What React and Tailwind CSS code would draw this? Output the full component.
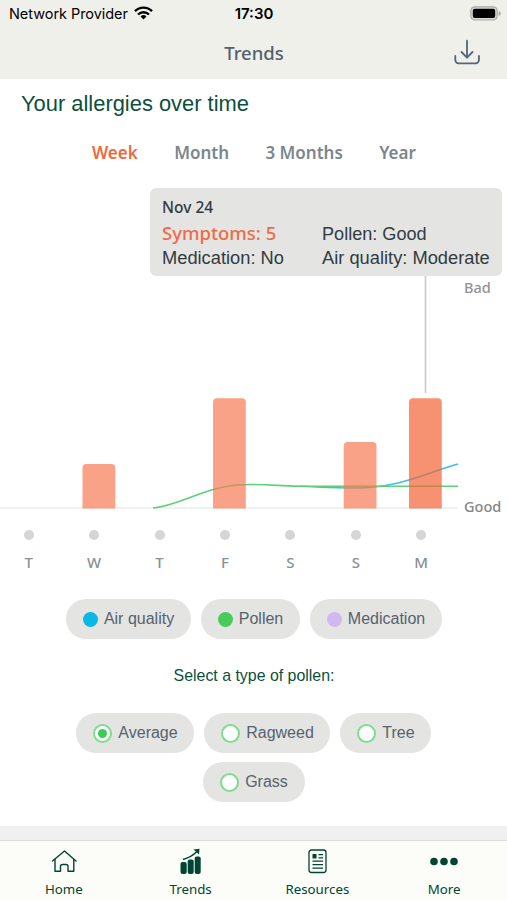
import { useState } from "react";

const periods = ["Week", "Month", "3 Months", "Year"];
const days = ["T", "W", "T", "F", "S", "S", "M"];

const bars = [
  { x: 82.5, y: 464 },
  { x: 213, y: 398.3 },
  { x: 343.7, y: 442 },
  { x: 409, y: 398.3, active: true },
];

const series = [
  { name: "Air quality", width: "w-[125px]", color: "bg-[#09b9e3]" },
  { name: "Pollen", width: "w-[99px]", color: "bg-[#49cb5c]" },
  { name: "Medication", width: "w-[132px]", color: "bg-[#d0b9f1]" },
];

const pollenTypes = [
  { name: "Average", width: "w-[118px]" },
  { name: "Ragweed", width: "w-[126px]" },
  { name: "Tree", width: "w-[91px]" },
  { name: "Grass", width: "w-[102px]" },
];

const StatusBar = () => (
  <div className="flex h-[27px] items-center justify-between pl-[9px] pr-[6px] text-black">
    <div className="flex w-[200px] items-center gap-[6px]">
      <span className="font-['Inter'] text-[14.5px] tracking-[-0.05px] whitespace-nowrap">Network Provider</span>
      <svg className="-mt-px" width="19" height="14" viewBox="0 0 19 14" fill="none" stroke="currentColor" strokeWidth="2.4">
        <path d="M1 5.2a12 12 0 0 1 17 0" />
        <path d="M4 8.5a7.8 7.8 0 0 1 11 0" />
        <path d="M9.5 13.6 6.5 10.5a4.3 4.3 0 0 1 6 0z" fill="currentColor" stroke="none" />
      </svg>
    </div>
    <span className="mr-[2px] pt-[2px] font-['Inter'] text-[15px] font-semibold">17:30</span>
    <div className="flex w-[200px] justify-end">
      <svg width="31" height="15" viewBox="0 0 31 15">
        <rect x="0.8" y="0.8" width="26.4" height="13.2" rx="4" fill="#d9d9d4" stroke="#aaaaa6" strokeWidth="1.2" />
        <rect x="2.8" y="2.8" width="22.4" height="9.2" rx="2" fill="#000" />
        <path d="M28.7 5v5c1.4-.4 2-1.4 2-2.5s-.6-2.1-2-2.5z" fill="#aaaaa6" />
      </svg>
    </div>
  </div>
);

const Header = () => (
  <div className="flex h-[52px] items-center justify-between px-[26px] text-[#53616c]">
    <div className="w-[28px]" />
    <h1 className="pl-px font-['Noto_Sans'] text-[18.5px] font-[550]">Trends</h1>
    <svg width="28" height="28" viewBox="0 0 28 28" fill="none" stroke="#526779" strokeWidth="1.8" strokeLinecap="round" strokeLinejoin="round">
      <path d="M14 1.7v17M8.5 13l5.5 5.6 5.5-5.6" />
      <path d="M2.3 17v4a3.3 3.3 0 0 0 3.3 3.3h17a3.3 3.3 0 0 0 3.3-3.3v-4" />
    </svg>
  </div>
);

const Tooltip = () => (
  <div className="absolute top-[8px] left-[150px] h-[88px] w-[352px] rounded-[6px] bg-[#e4e5e3] pt-[8px] pl-[12px] text-[#323a42]">
    <p className="font-['Noto_Sans'] text-[15.5px] leading-[22px] font-[550]">Nov 24</p>
    <div className="mt-[3px] grid grid-cols-[160px_1fr] font-['Liberation_Sans'] text-[18.1px] leading-[24px] whitespace-nowrap">
      <span className="font-['Noto_Sans'] text-[18.5px] font-[550] text-[#f26a43]">Symptoms: 5</span>
      <span className="pt-px">Pollen: Good</span>
      <span className="text-[18.3px]">Medication: No</span>
      <span className="text-[18.3px]">Air quality: Moderate</span>
    </div>
  </div>
);

const Chart = () => (
  <div className="relative h-[340px]">
    {/* plot uses screen coordinates, 180 is the top of the chart */}
    <svg className="block" width="507" height="340" viewBox="0 180 507 340" fill="none">
      <path d="M0 508H458" stroke="#e3e3e3" strokeWidth="1.2" />
      <path d="M425.5 276V393" stroke="#c9c9c9" strokeWidth="1.6" />
      <path d="M300 486.3C320 487 335 488 355 488C400 488 425 473 458 464" stroke="#3cbfe3" strokeWidth="1.6" />
      <path d="M153 508C185 504.5 205 484.5 250 484.5C275 484.5 280 486.3 310 486.3H458" stroke="#5fd077" strokeWidth="1.6" />
      {bars.map(({ x, y, active }) => (
        <path
          key={x}
          d={`M${x} 508.5V${y + 4}q0-4 4-4h24.8q4 0 4 4V508.5z`}
          fill={active ? "#f26435" : "#f87650"}
          fillOpacity={active ? 0.7 : 0.68}
        />
      ))}
    </svg>
    <Tooltip />
    <span className="absolute top-[98px] left-[464px] font-['Noto_Sans'] text-[14.5px] leading-[19px] font-[550] text-[#929292]">Bad</span>
    <span className="absolute top-[317px] left-[464px] font-['Noto_Sans'] text-[14.5px] leading-[19px] font-[550] text-[#858585]">Good</span>
  </div>
);

const navItems = [
  {
    name: "Home",
    icon: (
      <g fill="none" stroke="currentColor" strokeWidth="1.4" strokeLinejoin="round" strokeLinecap="round">
        <path d="M3.5 13 15.5 3l11.5 10" />
        <path d="M6 11.5V23.3H11.5V18.5q0-2 2-2h3.5q2 0 2 2v4.8h5.8V11.5" />
      </g>
    ),
  },
  {
    name: "Trends",
    icon: (
      <g fill="currentColor">
        <rect x="4.5" y="14" width="6.2" height="12" rx="2" />
        <rect x="11.7" y="11.5" width="6" height="14.5" rx="2" />
        <rect x="18.7" y="8.5" width="6" height="17.5" rx="2" />
        <path d="M7 11.5C13 10 17 7.5 21.5 3" fill="none" stroke="currentColor" strokeWidth="1.4" />
        <path d="M17.5 1.5 23.5.8 23 6.5z" />
      </g>
    ),
  },
  {
    name: "Resources",
    icon: (
      <g fill="none" stroke="currentColor" strokeWidth="1.3">
        <rect x="6" y="2" width="17" height="22.5" rx="2.5" />
        <rect x="9.5" y="6" width="4" height="4.5" fill="currentColor" stroke="none" />
        <path d="M15.5 6.7H20M15.5 9.8H20M9.5 13.2H20M9.5 16.7H20M9.5 20.2H20" />
      </g>
    ),
  },
  {
    name: "More",
    icon: (
      <g fill="currentColor">
        <circle cx="4" cy="13.5" r="3.8" />
        <circle cx="14" cy="13.5" r="3.8" />
        <circle cx="24" cy="13.5" r="3.8" />
      </g>
    ),
  },
];

const BottomNav = () => (
  <nav className="flex h-[60px] border-t border-[#dededc] bg-[#fcfcf9] text-[#004532]">
    {navItems.map((item) => (
      <button key={item.name} className="flex flex-1 flex-col items-center pt-[7px]">
        <svg width="28" height="28" viewBox="0 0 28 28">{item.icon}</svg>
        <span className="mt-[4px] pl-px font-['Noto_Sans'] text-[13.3px] leading-[18px]">{item.name}</span>
      </button>
    ))}
  </nav>
);

const App = () => {
  const [period, setPeriod] = useState("Week");
  const [pollen, setPollen] = useState("Average");

  return (
    <div className="flex h-[900px] w-[507px] flex-col overflow-hidden bg-white">
      <header className="h-[79px] bg-[#f0f0eb]">
        <StatusBar />
        <Header />
      </header>

      <main className="h-[747px]">
        <h2 className="pt-[11px] pl-[21px] font-['Liberation_Sans'] text-[21.9px] leading-[28px] text-[#0b4f3c]">
          Your allergies over time
        </h2>
        <div className="flex h-[62px] items-center gap-[36.4px] pt-[7px] pl-[92px] font-['Noto_Sans'] text-[17px] font-semibold">
          {periods.map((name) => (
            <button
              key={name}
              onClick={() => setPeriod(name)}
              className={period === name ? "text-[#f0683c]" : "text-[#7c868d]"}
            >
              {name}
            </button>
          ))}
        </div>

        <Chart />

        <div className="-ml-[4px] flex w-[458px] pt-[10px]">
          {days.map((day, i) => (
            <div key={i} className="flex flex-1 flex-col items-center">
              <span className="size-[10px] rounded-full bg-[#d5d5d5]" />
              <span className="mt-[12px] font-['Noto_Sans'] text-[15px] leading-[20px] font-medium text-[#8a9094]">{day}</span>
            </div>
          ))}
        </div>

        <div className="mt-[27px] flex justify-center gap-[10px]">
          {series.map((item) => (
            <button key={item.name} className={`flex h-[40px] items-center justify-center gap-[6px] rounded-full bg-[#e4e5e3] pl-px ${item.width}`}>
              <span className={`size-[15px] rounded-full ${item.color}`} />
              <span className="font-['Liberation_Sans'] text-[16px] text-[#56626d]">{item.name}</span>
            </button>
          ))}
        </div>

        <p className="mt-[27px] pl-px text-center font-['Liberation_Sans'] text-[15.9px] leading-[20px] text-[#0b4f3c]">
          Select a type of pollen:
        </p>

        <div className="mt-[27px] flex flex-wrap justify-center gap-x-[10px] gap-y-[9px] px-[60px]">
          {pollenTypes.map((type) => (
            <button
              key={type.name}
              onClick={() => setPollen(type.name)}
              className={`flex h-[40px] items-center justify-center gap-[6px] rounded-full bg-[#e4e5e3] pl-px ${type.width}`}
            >
              <span className="flex size-[19px] items-center justify-center rounded-full border-2 border-[#7fdc8e] bg-white">
                {pollen === type.name && <span className="size-[9px] rounded-full bg-[#3ccb55]" />}
              </span>
              <span className="font-['Liberation_Sans'] text-[16px] text-[#56626d]">{type.name}</span>
            </button>
          ))}
        </div>
      </main>

      <div className="h-[14px] bg-[#f0f0f0]" />
      <BottomNav />
    </div>
  );
};

export default App;
